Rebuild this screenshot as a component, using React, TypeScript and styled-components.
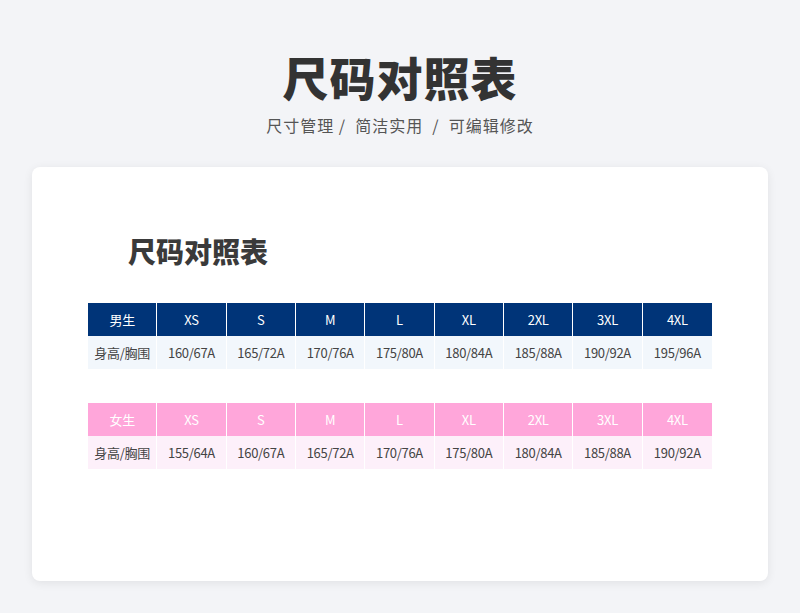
import React from "react";
import styled, { createGlobalStyle } from "styled-components";

const Global = createGlobalStyle`
  html, body { margin: 0; padding: 0; background: #f3f4f7; }
  body { font-family: "Noto Sans CJK SC", "Noto Sans", sans-serif; }
`;

const Page = styled.div`
  width: 800px; height: 613px; box-sizing: border-box;
  display: flex; flex-direction: column; align-items: center;
  padding-top: 44px;
`;
const Title = styled.h1`
  margin: 0; font-size: 46px; line-height: 64px; font-weight: 900; color: #333;
  letter-spacing: 1px;
`;
const Sub = styled.div`
  margin-top: 6px; font-size: 16px; color: #555; letter-spacing: 1px; line-height: 22px;
`;
const Card = styled.div`
  margin-top: 31px; width: 736px; height: 414px; background: #fff; border-radius: 8px;
  box-shadow: 0 2px 10px rgba(0,0,0,0.08); box-sizing: border-box;
  padding: 64px 56px 0 56px; display: flex; flex-direction: column;
`;
const CardTitle = styled.h2`
  margin: 0 0 0 40px; font-size: 28px; line-height: 40px; font-weight: 900; color: #3a3a3a;
`;
const Table = styled.div<{ $mt: number }>`
  margin-top: ${p => p.$mt}px;
  display: grid; grid-template-columns: repeat(9, 1fr); width: 624px;
`;
const Cell = styled.div<{ $bg: string; $color: string }>`
  height: 33px; display: flex; align-items: center; justify-content: center;
  background: ${p => p.$bg}; color: ${p => p.$color}; font-size: 13px;
  border-right: 1px solid #fff; box-sizing: border-box; letter-spacing: -0.3px;
  &:nth-child(9n) { border-right: none; }
`;

const sizes = ["XS", "S", "M", "L", "XL", "2XL", "3XL", "4XL"];
const men = ["160/67A", "165/72A", "170/76A", "175/80A", "180/84A", "185/88A", "190/92A", "195/96A"];
const women = ["155/64A", "160/67A", "165/72A", "170/76A", "175/80A", "180/84A", "185/88A", "190/92A"];

function SizeTable({ mt, label, head, row, data }: { mt: number; label: string; head: string; row: string; data: string[] }) {
  return (
    <Table $mt={mt}>
      <Cell $bg={head} $color="#fff">{label}</Cell>
      {sizes.map(s => <Cell key={s} $bg={head} $color="#fff">{s}</Cell>)}
      <Cell $bg={row} $color="#444">身高/胸围</Cell>
      {data.map((d, i) => <Cell key={i} $bg={row} $color="#444">{d}</Cell>)}
    </Table>
  );
}

export default function App() {
  return (
    <Page>
      <Global />
      <Title>尺码对照表</Title>
      <Sub>尺寸管理 / &nbsp;简洁实用 &nbsp;/ &nbsp;可编辑修改</Sub>
      <Card>
        <CardTitle>尺码对照表</CardTitle>
        <SizeTable mt={32} label="男生" head="#003478" row="#f2f7fc" data={men} />
        <SizeTable mt={34} label="女生" head="#ffa6da" row="#fdf0fa" data={women} />
      </Card>
    </Page>
  );
}
